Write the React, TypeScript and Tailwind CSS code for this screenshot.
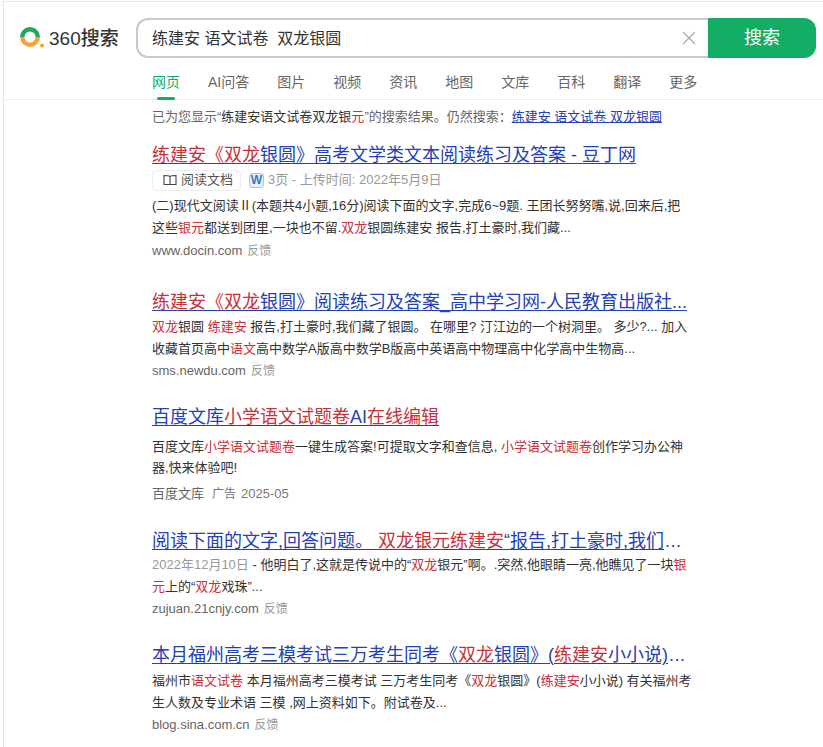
import { X } from "lucide-react";
import type { ReactNode } from "react";

const FONT = "font-['Liberation_Sans','Noto_Sans_CJK_SC',sans-serif]";

function R({ children }: { children: ReactNode }) {
  return <span className="text-[#c9303a]">{children}</span>;
}

// the ellipsis sits outside the link underline
function Dots() {
  return <span className="inline-block no-underline ml-[1px] tracking-[0.5px]">...</span>;
}

function Title({ children }: { children: ReactNode }) {
  return (
    <h3 className="text-[18px] leading-[24px] text-[#2440b3] underline underline-offset-2 whitespace-nowrap">
      {children}
    </h3>
  );
}

function Desc({ children, tight }: { children: ReactNode; tight?: boolean }) {
  return <p className={`text-[13px] text-[#333] w-[540px] ${tight ? "leading-[21px]" : "leading-[22px]"}`}>{children}</p>;
}

function Site({ url }: { url: string }) {
  return (
    <div className="flex items-baseline gap-[5px] text-[13px] leading-[22px] text-[#666]">
      <span>{url}</span>
      <span className="text-[12px] text-[#999]">反馈</span>
    </div>
  );
}

const nav = ["网页", "AI问答", "图片", "视频", "资讯", "地图", "文库", "百科", "翻译", "更多"];

export default function App() {
  return (
    <div className={`${FONT} w-[823px] h-[747px] overflow-hidden bg-white pl-[3px] pt-[1px]`}>
      <div className="h-full border-l border-t border-[#e6e6e6]">
        <header className="h-[98px] border-b border-[#eee]">
          <div className="flex items-center pt-[16px]">
            <div className="w-[132px] pl-[16px] flex items-center gap-[3px]">
              <svg width="26" height="24" viewBox="0 0 26 24">
                <path d="M2.25 11a7.75 7.75 0 0 1 15.5 0" fill="none" stroke="#1fa85f" strokeWidth="4.5" />
                <path d="M2.25 11a7.75 7.75 0 0 0 15.5 0" fill="none" stroke="#f5a337" strokeWidth="4.5" />
                <circle cx="22" cy="19.5" r="2" fill="#f5a337" />
              </svg>
              <span className="text-[19px] leading-none text-[#333] font-medium whitespace-nowrap">360搜索</span>
            </div>
            <div className="flex w-[680px] h-[40px]">
              <div className="flex-1 flex items-center border-2 border-r-0 border-[#c9c9c9] rounded-l-[12px] pl-[14px] pr-[8px]">
                <span className="flex-1 pt-[1px] text-[16px] text-[#333] whitespace-pre">练建安 语文试卷  双龙银圆</span>
                <X className="size-[22px] text-[#aaa]" strokeWidth={1.4} />
              </div>
              <button className="w-[108px] bg-[#13ad66] text-white text-[18px] rounded-r-[12px]">搜索</button>
            </div>
          </div>
          <nav className="flex gap-[28px] pl-[148px] mt-[14px] text-[14px] leading-[20px] text-[#666]">
            {nav.map((n, i) => (
              <span key={n} className={`relative ${i === 0 ? "text-[#13ad66]" : ""}`}>
                {n}
                {i === 0 && <span className="absolute left-[5px] right-[5px] top-[25px] h-[3px] rounded-sm bg-[#13ad66]" />}
              </span>
            ))}
          </nav>
        </header>

        <main className="pl-[148px]">
          <p className="mt-[7px] text-[13px] leading-[20px] text-[#666] whitespace-nowrap">
            已为您显示“<span className="text-[#333]">练建安语文试卷双龙银<R>元</R></span>”的搜索结果。仍然搜索：
            <span className="text-[#2440b3] underline">练建安 语文试卷 双龙银圆</span>
          </p>

          <section className="mt-[16px]">
            <Title><R>练建安《双龙</R>银圆》高考文学类文本阅读练习及答案 - 豆丁网</Title>
            <div className="mt-[1px] flex items-center h-[24px] text-[13px] text-[#999]">
              <span className="flex items-center gap-[4px] h-[21px] pl-[10px] pr-[7px] border border-[#eee] rounded-[5px] text-[#555]">
                <svg width="14" height="12" viewBox="0 0 14 12" fill="none" stroke="#444" strokeWidth="1.1">
                  <path d="M7 2.5C6 1.500 2.500 1.500 1 1.500v9h6zM7 2.500c1-1 4.500-1 6-1v9H7z" />
                </svg>
                阅读文档
              </span>
              <span className="ml-[8px] size-[15px] rounded-[3px] border border-[#a8c4ec] bg-[#e6eefa] text-[#3b78c9] font-bold text-[12px] flex items-center justify-center">W</span>
              <span className="ml-[4px]">3页 - 上传时间: 2022年5月9日</span>
            </div>
            <div className="mt-[3px]">
              <Desc>(二)现代文阅读Ⅱ(本题共4小题,16分)阅读下面的文字,完成6~9题. 王团长努努嘴,说,回来后,把这些<R>银元</R>都送到团里,一块也不留.<R>双龙</R>银圆练建安 报告,打土豪时,我们藏...</Desc>
            </div>
            <div className="mt-[1px]"><Site url="www.docin.com" /></div>
          </section>

          <section className="mt-[28px]">
            <Title><R>练建安《双龙</R>银圆》阅读练习及答案_高中学习网-人民教育出版社...</Title>
            <div className="mt-[2px]">
              <Desc><R>双龙</R>银圆 <R>练建安</R> 报告,打土豪时,我们藏了银圆。 在哪里? 汀江边的一个树洞里。 多少?... 加入收藏首页高中<R>语文</R>高中数学A版高中数学B版高中英语高中物理高中化学高中生物高...</Desc>
            </div>
            <Site url="sms.newdu.com" />
          </section>

          <section className="mt-[23px]">
            <Title>百度文库<R>小学语文试题卷</R>AI<R>在线编辑</R></Title>
            <div className="mt-[7px]">
              <Desc tight>百度文库<R>小学语文试题卷</R>一键生成答案!可提取文字和查信息, <R>小学语文试题卷</R>创作学习办公神器,快来体验吧!</Desc>
            </div>
            <div className="mt-[5px] flex items-baseline text-[13px] leading-[22px] text-[#666]">
              <span>百度文库</span>
              <span className="ml-[8px] text-[12px] text-[#777]">广告</span>
              <span className="ml-[5px] text-[#777]">2025-05</span>
            </div>
          </section>

          <section className="mt-[24px]">
            <Title>阅读下面的文字,回答问题。 <R>双龙银元练建安</R>“报告,打土豪时,我们<Dots /></Title>
            <div className="mt-[1px]">
              <Desc><span className="text-[#999]">2022年12月10日</span> - 他明白了,这就是传说中的“<R>双龙</R>银元”啊。.突然,他眼睛一亮,他瞧见了一块<R>银元</R>上的“<R>双龙</R>戏珠”...</Desc>
            </div>
            <Site url="zujuan.21cnjy.com" />
          </section>

          <section className="mt-[23px]">
            <Title>本月福州高考三模考试三万考生同考《<R>双龙</R>银圆》(<R>练建安</R>小小说)<Dots /></Title>
            <div className="mt-[3px]">
              <Desc>福州市<R>语文试卷</R> 本月福州高考三模考试 三万考生同考《<R>双龙</R>银圆》(<R>练建安</R>小小说) 有关福州考生人数及专业术语 三模 ,网上资料如下。附试卷及...</Desc>
            </div>
            <Site url="blog.sina.com.cn" />
          </section>
        </main>
      </div>
    </div>
  );
}
